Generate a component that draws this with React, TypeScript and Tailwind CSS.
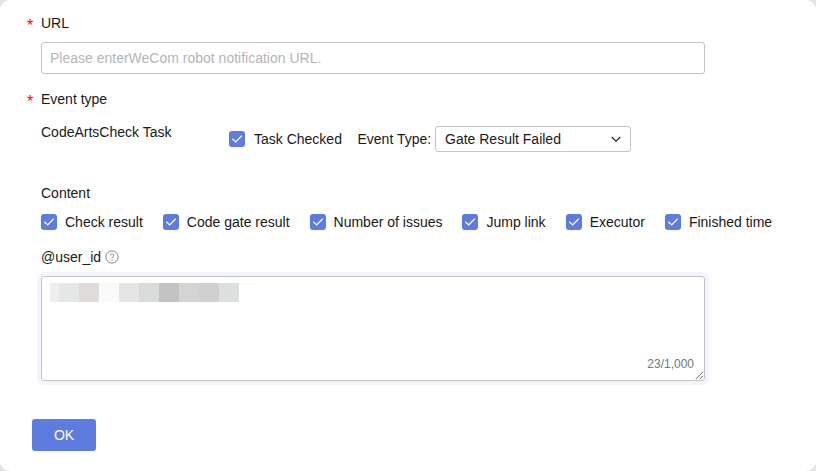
import React from "react";

const contentOptions = [
  "Check result",
  "Code gate result",
  "Number of issues",
  "Jump link",
  "Executor",
  "Finished time",
];

const maskTiles = [
  { width: 9, color: "#eeeeee" },
  { width: 20, color: "#e5e7e6" },
  { width: 20, color: "#dedcda" },
  { width: 20, color: "#fafafa" },
  { width: 20, color: "#e5e5e5" },
  { width: 20, color: "#dadcdb" },
  { width: 20, color: "#c3c3c3" },
  { width: 20, color: "#d6d3d4" },
  { width: 20, color: "#d0d0d0" },
  { width: 20, color: "#dce1e0" },
];

function Checkbox({ label }: { label: string }) {
  return (
    <label className="flex h-4 items-center gap-2 whitespace-nowrap">
      <span className="flex size-4 shrink-0 items-center justify-center rounded-[3px] bg-[#5e7ce0]">
        <svg viewBox="0 0 16 16" className="size-4" fill="none" stroke="#fff" strokeWidth="1.3">
          <path d="M3.3 7.8 6.7 10.9 12.7 4.8" />
        </svg>
      </span>
      <span>{label}</span>
    </label>
  );
}

function RequiredLabel({ children }: { children: React.ReactNode }) {
  return (
    <div className="flex h-5 items-center">
      <span className="w-[15px] pl-px pt-[6px] text-base leading-5 text-[#ff0000]">*</span>
      <span>{children}</span>
    </div>
  );
}

export default function App() {
  return (
    <div className="h-[471px] w-[816px] bg-[#e4e4e4]">
      <form className="flex h-full flex-col rounded-[10px] bg-white pl-[26px] pt-[13px] font-['Liberation_Sans',Arial,sans-serif] text-[14px] leading-5 text-[#191919]">
        <RequiredLabel>URL</RequiredLabel>
        <input
          className="ml-[15px] mt-[9px] h-8 w-[664px] shrink-0 rounded-[3px] border border-[#c3c3c5] px-2 outline-none placeholder:text-[#b5b5b8]"
          placeholder="Please enterWeCom robot notification URL."
        />
        <div className="mt-[15px]">
          <RequiredLabel>Event type</RequiredLabel>
        </div>
        <div className="ml-[15px] mt-[17px] flex h-[26px] items-center">
          <span className="mb-[14px] w-[188px]">CodeArtsCheck Task</span>
          <div className="flex w-[113px] [&_label]:gap-[9px]">
            <Checkbox label="Task Checked" />
          </div>
          <span className="ml-[15.5px] w-[77.5px] whitespace-nowrap">Event Type:</span>
          <div className="flex h-[26px] w-[196px] items-center justify-between rounded-[3px] border border-[#c3c3c5] pl-[9px] pr-2">
            <span>Gate Result Failed</span>
            <svg viewBox="0 0 12 12" className="size-3" fill="none" stroke="#252b3a" strokeWidth="1.2">
              <path d="M1.7 4 6 8.2 10.3 4" />
            </svg>
          </div>
        </div>
        <div className="ml-[15px] mt-[31px]">Content</div>
        <div className="ml-[15px] mt-[11px] flex gap-5">
          {contentOptions.map((option) => (
            <Checkbox key={option} label={option} />
          ))}
        </div>
        <div className="ml-[15px] mt-[17px] flex h-5 items-center gap-1">
          <span>@user_id</span>
          <svg viewBox="0 0 14 14" className="size-[14px]" fill="none" stroke="#777" strokeWidth="0.9">
            <circle cx="7" cy="7" r="6.1" />
            <path d="M5.2 5.6c0-2.2 3.6-2.2 3.6 0C8.8 6.8 7 6.9 7 8.3M7 9.4v1.1" />
          </svg>
        </div>
        <div className="ml-[15px] mt-[9px] flex h-[105px] w-[664px] shrink-0 flex-col justify-between rounded-[3px] border border-[#c3c3c5] pl-2 pt-[6px] shadow-[0_0_0_4px_#f2f5fc]">
          <div className="flex h-[19px]">
            {maskTiles.map((tile, index) => (
              <div key={index} className="h-full" style={{ width: tile.width, backgroundColor: tile.color }} />
            ))}
            <div className="h-px w-[17px] bg-[#f7f7f7]" />
          </div>
          <div className="flex items-end justify-end">
            <span className="mb-[8px] mr-px text-xs leading-4 text-[#71757f]">23/1,000</span>
            <svg viewBox="0 0 9 9" className="size-[9px]" fill="none" stroke="#555" strokeWidth="0.9">
              <path d="M.8 8 8 .8M4.8 8 8 4.8" />
            </svg>
          </div>
        </div>
        <button
          type="button"
          className="ml-[6px] mt-[38px] h-8 w-16 rounded-[3px] bg-[#5e7ce0] text-white"
        >
          OK
        </button>
      </form>
    </div>
  );
}
